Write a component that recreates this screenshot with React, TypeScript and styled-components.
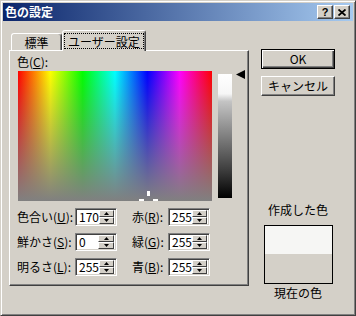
import React from 'react'
import styled, { createGlobalStyle } from 'styled-components'

const face = '#d4d0c8'
const font = `"Noto Sans CJK JP", "Liberation Sans", sans-serif`

const GlobalStyle = createGlobalStyle`
  html, body { margin: 0; padding: 0; background: ${face}; }
  body { font-family: ${font}; font-size: 12px; color: #000; }
  * { box-sizing: border-box; }
`

const Window = styled.div`
  width: 356px;
  height: 316px;
  background: ${face};
  border: 1px solid;
  border-color: ${face} #404040 #404040 ${face};
  box-shadow: inset 1px 1px #fff, inset -1px -1px #808080;
  padding: 2px;
  display: flex;
  flex-direction: column;
`

const TitleBar = styled.div`
  height: 18px;
  flex: none;
  display: flex;
  align-items: center;
  justify-content: space-between;
  padding: 0 3px 0 2px;
  background: linear-gradient(to right, #0a246a, #a6caf0);
`

const TitleText = styled.span`
  color: #fff;
  font-weight: bold;
  font-size: 12px;
  line-height: 14px;
`

const TitleButtons = styled.div`
  display: flex;
  gap: 1px;
`

const TitleButton = styled.div`
  width: 16px;
  height: 14px;
  background: ${face};
  border: 1px solid;
  border-color: #fff #404040 #404040 #fff;
  box-shadow: inset -1px -1px #808080;
  display: flex;
  align-items: center;
  justify-content: center;
  font-family: "Liberation Sans", sans-serif;
  font-weight: bold;
  font-size: 11px;
  line-height: 11px;
`

const Body = styled.div`
  flex: 1;
  display: flex;
  padding: 9px 0 0 6px;
`

const LeftCol = styled.div`
  width: 240px;
  display: flex;
  flex-direction: column;
`

const TabStrip = styled.div`
  display: flex;
  align-items: flex-end;
  height: 20px;
  padding-left: 2px;
`

const Tab = styled.div<{ $active?: boolean }>`
  width: ${p => (p.$active ? 84 : 51)}px;
  height: ${p => (p.$active ? 21 : 17)}px;
  margin-bottom: ${p => (p.$active ? -1 : 0)}px;
  position: relative;
  z-index: ${p => (p.$active ? 1 : 0)};
  background: ${face};
  border: 1px solid;
  border-bottom: none;
  border-color: #fff #404040 transparent #fff;
  box-shadow: inset -1px 0 #808080;
  border-radius: 3px 3px 0 0;
  text-align: center;
  line-height: 13px;
  padding-top: 2px;
`

const Focus = styled.span`
  display: inline-block;
  padding: 1px 3px 0;
  border: 1px dotted #000;
  line-height: 13px;
`

const Panel = styled.div`
  height: 236px;
  border: 1px solid;
  border-color: #fff #404040 #404040 #fff;
  box-shadow: inset -1px -1px #808080;
  padding: 4px 0 0 7px;
`

const Label = styled.div<{ $second?: boolean }>`
  line-height: 14px;
  white-space: nowrap;
  padding-left: ${p => (p.$second ? 15 : 0)}px;
`

const SpectrumRow = styled.div`
  display: flex;
  align-items: flex-start;
  margin: 2px 0 0 1px;
`

const Spectrum = styled.div`
  width: 194px;
  height: 130px;
  position: relative;
  background:
    linear-gradient(to bottom, rgba(128, 128, 128, 0), #808080),
    linear-gradient(to right, #f00, #ff0, #0f0, #0ff, #00f, #f0f, #f00);
`

const Crosshair = styled.svg`
  position: absolute;
  left: 0;
  top: 0;
`

const LumBar = styled.div`
  width: 14px;
  height: 124px;
  margin: 3px 0 0 6px;
  background: linear-gradient(#fff 0%, #f6f6f6 16%, #c4c4c4 22%, #808080 50%, #3c3c3c 78%, #000 100%);
`

const Arrow = styled.svg`
  margin: -1px 0 0 4px;
`

const Fields = styled.div`
  display: grid;
  grid-template-columns: 58px 42px 51px 42px;
  row-gap: 7px;
  align-items: center;
  margin-top: 7px;
`

const SpinField = styled.div`
  width: 42px;
  height: 18px;
  background: #fff;
  border: 1px solid;
  border-color: #808080 #fff #fff #808080;
  box-shadow: inset 1px 1px #404040, inset -1px -1px ${face};
  display: flex;
  align-items: center;
  padding: 2px;
`

const Value = styled.span`
  flex: 1;
  padding-left: 1px;
  line-height: 14px;
`

const Spinner = styled.div`
  width: 16px;
  height: 14px;
  display: flex;
  flex-direction: column;
`

const SpinBtn = styled.div`
  flex: 1;
  background: ${face};
  border: 1px solid;
  border-color: #fff #404040 #404040 #fff;
  display: flex;
  align-items: center;
  justify-content: center;
`

const RightCol = styled.div`
  width: 74px;
  margin-left: 12px;
  padding-top: 19px;
  display: flex;
  flex-direction: column;
  align-items: center;
`

const Button = styled.div<{ $default?: boolean }>`
  width: 74px;
  height: 20px;
  margin-bottom: 7px;
  background: ${face};
  border: 1px solid;
  border-color: ${p => (p.$default ? '#000' : '#fff #404040 #404040 #fff')};
  box-shadow: ${p =>
    p.$default
      ? 'inset 1px 1px #fff, inset -1px -1px #404040, inset -2px -2px #808080'
      : 'inset -1px -1px #808080'};
  display: flex;
  align-items: center;
  justify-content: center;
  line-height: 14px;
`

const CustomLabel = styled.div`
  margin-top: 100px;
  line-height: 14px;
`

const ColorBox = styled.div`
  width: 69px;
  height: 59px;
  margin-top: 8px;
  border: 1px solid #000;
  display: flex;
  flex-direction: column;
`

const Swatch = styled.div<{ $color: string; $h?: number }>`
  background: ${p => p.$color};
  height: ${p => (p.$h ? `${p.$h}px` : 'auto')};
  flex: ${p => (p.$h ? 'none' : 1)};
`

const CurrentLabel = styled.div`
  margin-top: 2px;
  line-height: 14px;
`

const Tri = ({ up }: { up?: boolean }) => (
  <svg width="5" height="3" viewBox="0 0 5 3">
    <path d={up ? 'M2.5 0 L5 3 L0 3 Z' : 'M0 0 L5 0 L2.5 3 Z'} fill="#000" />
  </svg>
)

const Spin = ({ value }: { value: string }) => (
  <SpinField>
    <Value>{value}</Value>
    <Spinner>
      <SpinBtn><Tri up /></SpinBtn>
      <SpinBtn><Tri /></SpinBtn>
    </Spinner>
  </SpinField>
)

const rows: [string, string, string, string, string, string][] = [
  ['色合い', 'U', '170', '赤', 'R', '255'],
  ['鮮かさ', 'S', '0', '緑', 'G', '255'],
  ['明るさ', 'L', '255', '青', 'B', '255'],
]

export default function App() {
  return (
    <>
      <GlobalStyle />
      <Window>
        <TitleBar>
          <TitleText>色の設定</TitleText>
          <TitleButtons>
            <TitleButton>?</TitleButton>
            <TitleButton>
              <svg width="8" height="7" viewBox="0 0 8 7">
                <path d="M0.5 0.5 L7.5 6.5 M7.5 0.5 L0.5 6.5" stroke="#000" strokeWidth="1.8" />
              </svg>
            </TitleButton>
          </TitleButtons>
        </TitleBar>
        <Body>
          <LeftCol>
            <TabStrip>
              <Tab>標準</Tab>
              <Tab $active>
                <Focus>ユーザー設定</Focus>
              </Tab>
            </TabStrip>
            <Panel>
              <Label>
                色(<u>C</u>):
              </Label>
              <SpectrumRow>
                <Spectrum>
                  <Crosshair width="194" height="130">
                    <rect x="129" y="120" width="3" height="5" fill="#fff" />
                    <rect x="121" y="128" width="5" height="2" fill="#fff" />
                    <rect x="135" y="128" width="5" height="2" fill="#fff" />
                  </Crosshair>
                </Spectrum>
                <LumBar />
                <Arrow width="9" height="9" viewBox="0 0 9 9">
                  <path d="M0 4.5 L9 0 L9 9 Z" fill="#000" />
                </Arrow>
              </SpectrumRow>
              <Fields>
                {rows.map(r => (
                  <React.Fragment key={r[1]}>
                    <Label>
                      {r[0]}(<u>{r[1]}</u>):
                    </Label>
                    <Spin value={r[2]} />
                    <Label $second>
                      {r[3]}(<u>{r[4]}</u>):
                    </Label>
                    <Spin value={r[5]} />
                  </React.Fragment>
                ))}
              </Fields>
            </Panel>
          </LeftCol>
          <RightCol>
            <Button $default>OK</Button>
            <Button>キャンセル</Button>
            <CustomLabel>作成した色</CustomLabel>
            <ColorBox>
              <Swatch $color="#f6f6f4" $h={28} />
              <Swatch $color={face} />
            </ColorBox>
            <CurrentLabel>現在の色</CurrentLabel>
          </RightCol>
        </Body>
      </Window>
    </>
  )
}
